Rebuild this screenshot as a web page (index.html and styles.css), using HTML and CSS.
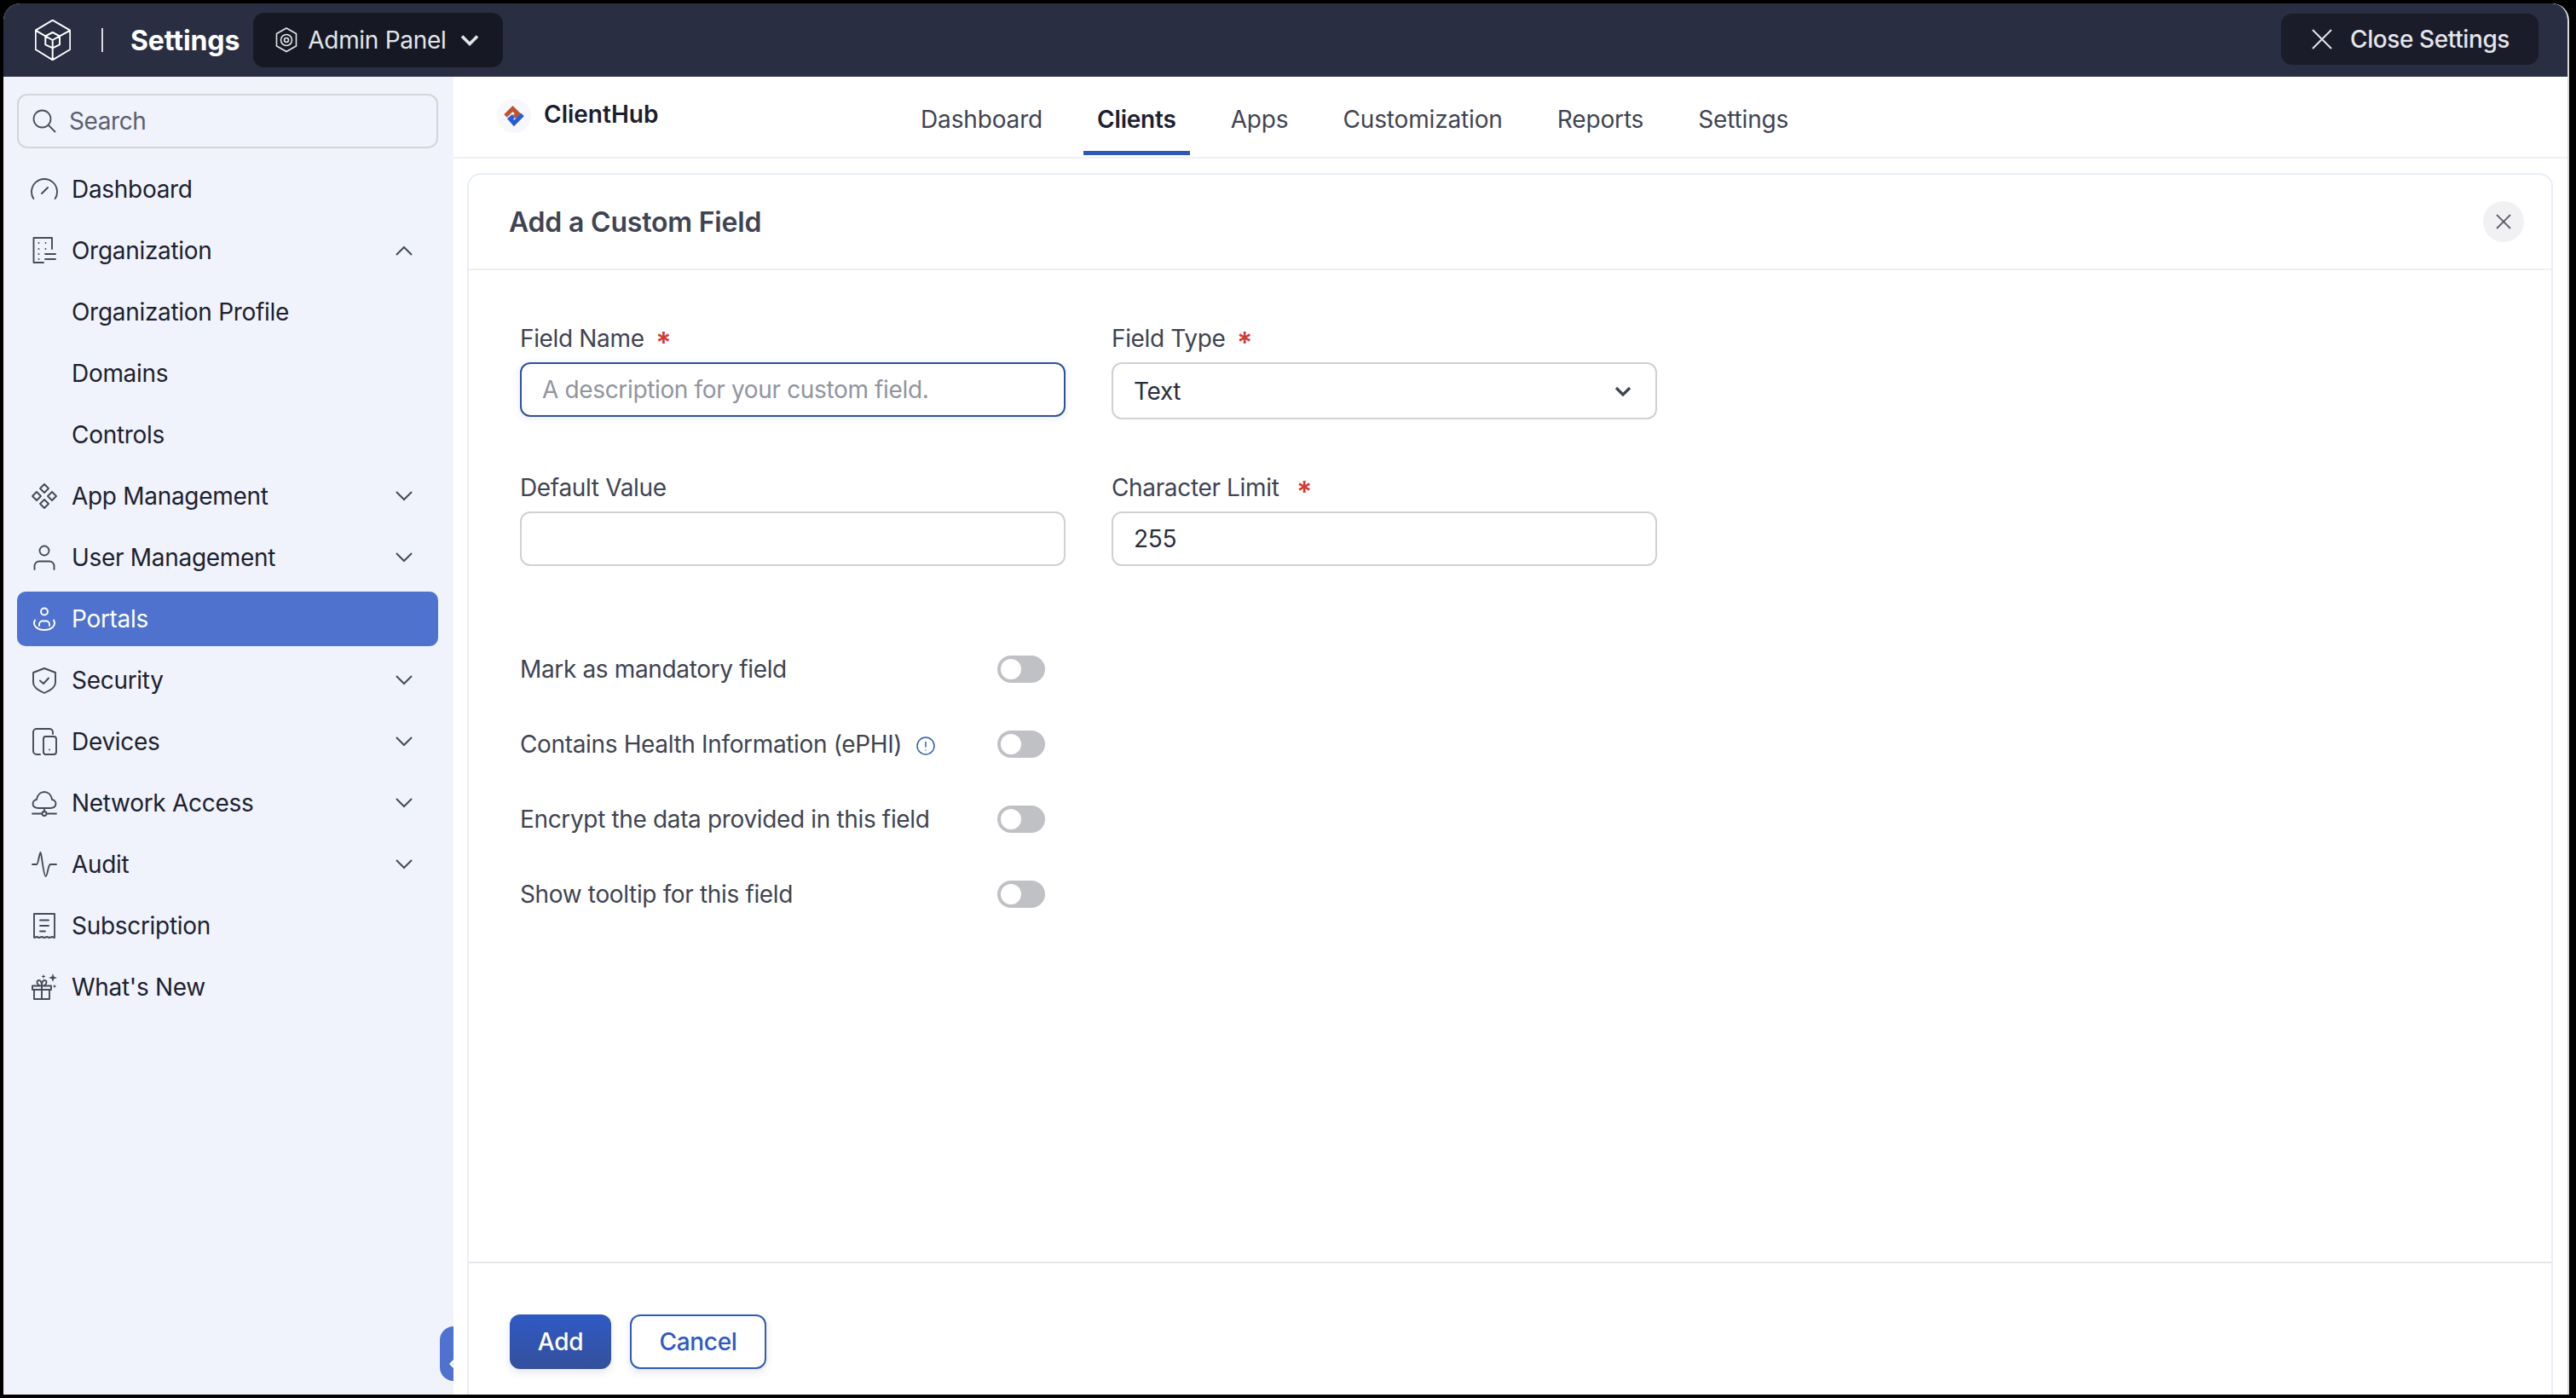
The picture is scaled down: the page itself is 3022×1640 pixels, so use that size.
FILE: index.html
```html
<!DOCTYPE html>
<html lang="en">
<head>
<meta charset="utf-8">
<title>Settings</title>
<link rel="stylesheet" href="styles.css">
</head>
<body>
<div class="frame">
  <header class="topbar">
    <svg class="brand-logo" viewBox="0 0 42 48"><path d="M20.700 .7 41.300 12.700V35L20.700 47.300 .7 35V12.700ZM20.700 15 29 19.300V29.300L20.700 33.300 12.300 29.300V19.300ZM.7 12.700 12.300 19.300 20.700 24 29 19.300 41.300 12.700M20.700 24V47.300"/></svg>
    <span class="sep"></span>
    <span class="app-title">Settings</span>
    <button class="panel-btn">
      <svg class="panel-ico" viewBox="0 0 26 30"><path d="M13 1 24.500 7.500V22L13 28.500 1.500 22V7.500Z"/><circle cx="13" cy="15" r="6.500"/><circle cx="13" cy="15" r="2.500"/></svg>
      <span>Admin Panel</span>
      <svg class="panel-chev" viewBox="0 0 22 14"><path d="M2 2.500 11 11.500 20 2.500"/></svg>
    </button>
    <button class="close-settings">
      <svg class="x-ico" viewBox="0 0 24 24"><path d="M1 1 23 23M23 1 1 23"/></svg>
      <span>Close Settings</span>
    </button>
  </header>
  <div class="body">
    <aside class="side">
      <div class="search">
        <svg class="search-ico" viewBox="0 0 28 28"><circle cx="11.500" cy="11.500" r="10"/><path d="M18.500 18.500 27 27"/></svg>
        <span>Search</span>
      </div>
      <nav class="nav">
        <a class="row"><svg class="ico" viewBox="0 0 32 32"><path d="M3.300 27A15 15 0 1 1 28.700 27M13 21 20 14"/></svg><span class="lbl">Dashboard</span></a>
        <a class="row"><svg class="ico" viewBox="0 0 32 32"><path d="M25 14V1H3.500V30H15M9.500 7h.01M17.500 7h.01M9.500 14h.01M17.500 14h.01M9.500 20h.01M9.500 26h.01M17 20H29M17 26H29"/></svg><span class="lbl">Organization</span><svg class="chev" viewBox="0 0 20 12"><path d="M1 11 10 2 19 11"/></svg></a>
        <a class="row sub"><span class="lbl">Organization Profile</span></a>
        <a class="row sub"><span class="lbl">Domains</span></a>
        <a class="row sub"><span class="lbl">Controls</span></a>
        <a class="row"><svg class="ico" viewBox="0 0 32 32"><path d="M16 2 21 7 16 12 11 7ZM7 11 12 16 7 21 2 16ZM25 11 30 16 25 21 20 16ZM16 20 21 25 16 30 11 25Z"/></svg><span class="lbl">App Management</span><svg class="chev" viewBox="0 0 20 12"><path d="M1 1 10 10 19 1"/></svg></a>
        <a class="row"><svg class="ico" viewBox="0 0 32 32"><circle cx="16" cy="8" r="5.500"/><path d="M4.500 30V26A5.500 5.500 0 0 1 10 20.500H22A5.500 5.500 0 0 1 27.500 26V30"/></svg><span class="lbl">User Management</span><svg class="chev" viewBox="0 0 20 12"><path d="M1 1 10 10 19 1"/></svg></a>
        <a class="row active"><svg class="ico" viewBox="0 0 32 32"><circle cx="16" cy="7.500" r="4"/><path d="M5 17.500C1.500 24 8 29 16 29S30.500 24 27 17.500M10 24V22.500A4 4 0 0 1 14 18.500H18A4 4 0 0 1 22 22.500V24"/></svg><span class="lbl">Portals</span></a>
        <a class="row"><svg class="ico" viewBox="0 0 32 32"><path d="M16 2 29 7V19C29 24 23 28 16 31 9 28 3 24 3 19V7ZM11 16.500 15 20 21 13.500"/></svg><span class="lbl">Security</span><svg class="chev" viewBox="0 0 20 12"><path d="M1 1 10 10 19 1"/></svg></a>
        <a class="row"><svg class="ico" viewBox="0 0 32 32"><path d="M11 31H7A4 4 0 0 1 3 27V5A4 4 0 0 1 7 1H22A4 4 0 0 1 26 5V7M17 10H27A3 3 0 0 1 30 13V28A3 3 0 0 1 27 31H17A3 3 0 0 1 15 28V13A3 3 0 0 1 17 10ZM22 25.500h.01"/></svg><span class="lbl">Devices</span><svg class="chev" viewBox="0 0 20 12"><path d="M1 1 10 10 19 1"/></svg></a>
        <a class="row"><svg class="ico" viewBox="0 0 32 32"><path d="M9 22C1 22 .5 13 7 12 8 6 12 3 16 3S24 6 25 12C31.500 13 31 22 23 22ZM16 22V26M2 28.500H13M19 28.500H30"/><circle cx="16" cy="28.500" r="2.500"/></svg><span class="lbl">Network Access</span><svg class="chev" viewBox="0 0 20 12"><path d="M1 1 10 10 19 1"/></svg></a>
        <a class="row"><svg class="ico" viewBox="0 0 32 32"><path d="M2 16H7C9 16 10 3 11.500 2 13 3 15 30 17.500 30 20 30 20 17 23 16H30"/></svg><span class="lbl">Audit</span><svg class="chev" viewBox="0 0 20 12"><path d="M1 1 10 10 19 1"/></svg></a>
        <a class="row"><svg class="ico" viewBox="0 0 32 32"><path d="M4 2H28V30L25 29 22 30 19 29 16 30 13 29 10 30 7 29 4 30ZM11 9.500H21M11 16H21M11 22.500H17"/></svg><span class="lbl">Subscription</span></a>
        <a class="row"><svg class="ico" viewBox="0 0 32 32"><path d="M2 14.500H24V19H2ZM4 19V30H22V19M13 14.500V30M13 14.500C7 14.500 6 8 9.500 8 12 8 13 11 13 14.500 13 11 14 8 16.500 8 20 8 19 14.500 13 14.500Z"/><path class="sparkle" d="M26 0 27.300 3.700 31 5 27.300 6.300 26 10 24.700 6.300 21 5 24.700 3.700ZM15 1 15.800 2.700 17.500 3.500 15.800 4.300 15 6 14.200 4.300 12.500 3.500 14.200 2.700ZM28 13 28.700 14.300 30 15 28.700 15.700 28 17 27.300 15.700 26 15 27.300 14.300Z"/></svg><span class="lbl">What's New</span></a>
      </nav>
      <button class="collapse" aria-label="Collapse"><svg viewBox="0 0 10 16"><path d="M8 2 2 8 8 14"/></svg></button>
    </aside>
    <main class="main">
      <div class="tabbar">
        <div class="hub">
          <span class="hub-logo"><svg viewBox="0 0 26 28"><path class="hub-red" d="M3 14 11.500 5.500 17.500 11.500 13.500 15"/><path class="hub-blue" d="M12.500 14 8.500 17.500 13 22.500 23 12.500"/></svg></span>
          <span class="hub-name">ClientHub</span>
        </div>
        <nav class="tabs">
          <a class="tab">Dashboard</a>
          <a class="tab on">Clients</a>
          <a class="tab">Apps</a>
          <a class="tab">Customization</a>
          <a class="tab">Reports</a>
          <a class="tab">Settings</a>
        </nav>
      </div>
      <section class="card">
        <div class="card-head">
          <h1 class="card-title">Add a Custom Field</h1>
          <button class="card-close" aria-label="Close"><svg viewBox="0 0 18 18"><path d="M1 1 17 17M17 1 1 17"/></svg></button>
        </div>
        <div class="card-body">
          <div class="grid">
            <div class="field">
              <label class="flabel">Field Name <b class="req">*</b></label>
              <div class="input focus"><span class="ph">A description for your custom field.</span></div>
            </div>
            <div class="field">
              <label class="flabel">Field Type <b class="req">*</b></label>
              <div class="input tall"><span>Text</span><svg class="sel-chev" viewBox="0 0 20 12"><path d="M2 2 10 10 18 2"/></svg></div>
            </div>
            <div class="field">
              <label class="flabel">Default Value</label>
              <div class="input"></div>
            </div>
            <div class="field">
              <label class="flabel">Character Limit <b class="req gap">*</b></label>
              <div class="input"><span>255</span></div>
            </div>
          </div>
          <div class="toggles">
            <div class="t-row"><span class="t-label">Mark as mandatory field</span><span class="switch"></span></div>
            <div class="t-row"><span class="t-label">Contains Health Information (ePHI)<svg class="info" viewBox="0 0 22 22"><circle cx="11" cy="11" r="10"/><path d="M11 6V12.500M11 15.500V16.500"/></svg></span><span class="switch"></span></div>
            <div class="t-row"><span class="t-label">Encrypt the data provided in this field</span><span class="switch"></span></div>
            <div class="t-row"><span class="t-label">Show tooltip for this field</span><span class="switch"></span></div>
          </div>
        </div>
        <div class="card-foot">
          <button class="btn primary">Add</button>
          <button class="btn ghost">Cancel</button>
        </div>
      </section>
    </main>
  </div>
</div>
</body>
</html>
```
FILE: styles.css
```css
* { box-sizing: border-box; }
html, body { margin: 0; height: 100%; }
body {
  background: #000;
  padding: 4px 8px 4px 4px;
  font-family: Inter, "Liberation Sans", sans-serif;
  font-size: 28px;
  overflow: hidden;
}
button { font: inherit; border: 0; padding: 0; background: none; }
svg { display: block; fill: none; }

.frame {
  height: 1632px;
  width: 3010px;
  background: #fff;
  border-radius: 20px 20px 0 0;
  border-right: 2px solid #d9d9dc;
  display: flex;
  flex-direction: column;
  overflow: hidden;
}

.topbar {
  flex: 0 0 86px;
  background: #2a2e42;
  border-radius: 18px 18px 0 0;
  display: flex;
  align-items: center;
  padding: 0 34px 0 37px;
  color: #fff;
}
.brand-logo { width: 42px; height: 48px; stroke: #fff; stroke-width: 2; stroke-linejoin: round; }
.sep { width: 2px; height: 28px; background: #d9dae0; margin: 0 32px 0 36px; }
.app-title { font-size: 32px; font-weight: 700; letter-spacing: -.1px; }
.panel-btn {
  margin-left: 16px;
  height: 64px;
  width: 293px;
  background: #161923;
  border-radius: 13px;
  color: #e4e5ea;
  display: flex;
  align-items: center;
  padding-left: 26px;
  align-self: center;
}
.panel-ico { width: 26px; height: 30px; stroke: #e4e5ea; stroke-width: 1.6; }
.panel-btn span { margin-left: 12px; font-size: 28px; letter-spacing: -.3px; }
.panel-chev { width: 22px; height: 14px; margin-left: 17px; stroke: #e4e5ea; stroke-width: 3.6; }
.close-settings {
  margin-left: auto;
  height: 60px;
  width: 302px;
  margin-top: -2px;
  background: #1a1c2a;
  border-radius: 13px;
  color: #e4e5ea;
  display: flex;
  align-items: center;
  padding-left: 36px;
}
.x-ico { width: 24px; height: 24px; stroke: #e4e5ea; stroke-width: 2; }
.close-settings span { margin-left: 21px; font-size: 28px; font-weight: 500; letter-spacing: -.4px; }

.body { flex: 1; display: flex; min-height: 0; }

.side {
  position: relative;
  flex: 0 0 528px;
  background: #f0f3fb;
  padding: 20px 18px 0 16px;
}
.search {
  height: 64px;
  border: 2px solid #d4d5da;
  border-radius: 12px;
  display: flex;
  align-items: center;
  padding-left: 16px;
  color: #5b6070;
}
.search-ico { width: 28px; height: 28px; stroke: #4a4f5e; stroke-width: 1.8; }
.search span { margin-left: 15px; letter-spacing: -.4px; }
.nav { margin-top: 12px; display: flex; flex-direction: column; }
.row {
  height: 72px;
  display: flex;
  align-items: center;
  padding: 0 30px 0 16px;
  border-radius: 10px;
  color: #1c2130;
  letter-spacing: -.3px;
}
.row.sub .lbl { margin-left: 48px; }
.row.active { height: 64px; margin: 4px 0; background: #4e72cd; color: #fff; }
.ico { width: 32px; height: 32px; flex: none; stroke: #454a59; stroke-width: 1.9; stroke-linecap: round; stroke-linejoin: round; }
.row.active .ico { stroke: #fff; }
.sparkle { fill: #454a59; stroke: none; }
.lbl { margin-left: 16px; flex: 1; }
.chev { width: 20px; height: 12px; stroke: #454a59; stroke-width: 2; }
.collapse {
  position: absolute;
  right: 0;
  bottom: 16px;
  width: 16px;
  height: 64px;
  background: #4e72cd;
  border-radius: 16px 0 0 16px;
  overflow: hidden;
  padding: 24px 0 0 11px;
}
.collapse svg { width: 10px; height: 16px; stroke: #fff; stroke-width: 3; }

.main { flex: 1; min-width: 0; display: flex; flex-direction: column; padding-right: 17px; }
.tabbar {
  flex: 0 0 96px;
  margin-right: -17px;
  border-bottom: 2px solid #f0f0f3;
  display: flex;
  padding-left: 51px;
}
.hub { width: 481px; display: flex; align-items: center; height: 90px; }
.hub-logo { width: 40px; height: 40px; border-radius: 50%; background: #f6f8fc; display: flex; align-items: center; justify-content: center; margin-top: 2px; }
.hub-logo svg { width: 26px; height: 28px; stroke-width: 5; stroke-linejoin: miter; }
.hub-red { stroke: #bb5430; }
.hub-blue { stroke: #2a5bd7; }
.hub-name { margin: -2px 0 0 15px; font-weight: 600; color: #1b1e2c; letter-spacing: 0; }
.tabs { display: flex; gap: 32px; }
.tab {
  height: 92px;
  padding: 12px 16px 0;
  display: flex;
  align-items: center;
  color: #3f4452;
  letter-spacing: -.15px;
  border-bottom: 5px solid transparent;
}
.tab.on { color: #1b2030; font-weight: 600; letter-spacing: -.2px; border-bottom-color: #2f57b8; }

.card {
  flex: 1;
  margin: 17px 0 0 16px;
  border: 2px solid #e8edf8;
  border-bottom: 0;
  border-radius: 16px 16px 0 0;
  display: flex;
  flex-direction: column;
  min-height: 0;
}
.card-head {
  flex: 0 0 112px;
  border-bottom: 2px solid #f0f0f3;
  display: flex;
  align-items: center;
  justify-content: space-between;
  padding: 0 32px 0 47px;
}
.card-title { margin: 0; font-size: 32px; font-weight: 600; color: #3f4452; letter-spacing: -.2px; }
.card-close { width: 48px; height: 48px; border-radius: 50%; background: #f1f1f3; display: flex; align-items: center; justify-content: center; }
.card-close svg { width: 18px; height: 18px; stroke: #5b5f6b; stroke-width: 1.8; }

.card-body { flex: 1; padding: 62px 0 0 60px; }
.grid { display: grid; grid-template-columns: 640px 640px; column-gap: 54px; row-gap: 0; }
.field { height: 175px; }
.flabel { display: block; height: 46px; line-height: 36px; color: #3f4452; letter-spacing: -.35px; }
.req { color: #d43a34; font-weight: 600; font-size: 34px; line-height: 0; vertical-align: -7px; margin-left: 6px; }
.req.gap { margin-left: 13px; }
.input {
  height: 64px;
  border: 2px solid #d0d1d5;
  border-radius: 12px;
  display: flex;
  align-items: center;
  justify-content: space-between;
  padding: 0 24px;
  color: #2a2e3a;
  letter-spacing: -.35px;
}
.input.tall { height: 67px; padding-right: 28px; }
.input.focus { border-color: #2f4f9f; box-shadow: 0 2px 10px rgba(47, 87, 184, .12); }
.ph { color: #9095a1; }
.sel-chev { width: 20px; height: 12px; stroke: #3f4452; stroke-width: 3.2; }

.toggles { margin-top: 40px; display: flex; flex-direction: column; gap: 56px; }
.t-row { height: 32px; width: 616px; display: flex; align-items: center; justify-content: space-between; color: #3f4452; letter-spacing: -.35px; }
.t-label { display: flex; align-items: center; }
.info { width: 22px; height: 22px; margin: 3px 0 0 17px; stroke: #2f5fb8; stroke-width: 1.5; }
.switch { position: relative; width: 56px; height: 32px; border-radius: 16px; background: #c0c1c5; }
.switch::before { content: ""; position: absolute; left: 4px; top: 4px; width: 24px; height: 24px; border-radius: 50%; background: #fff; }

.card-foot {
  flex: 0 0 156px;
  border-top: 2px solid #e6e6e9;
  display: flex;
  gap: 22px;
  padding: 60px 0 0 48px;
}
.btn { height: 64px; border-radius: 12px; font-weight: 500; letter-spacing: -.3px; box-shadow: 0 4px 10px rgba(40, 60, 120, .12); }
.primary { width: 119px; background: linear-gradient(#2f59c4, #34509c); color: #fff; }
.ghost { width: 160px; background: #fff; border: 2px solid #2f59c4; color: #2f59c4; }
```
